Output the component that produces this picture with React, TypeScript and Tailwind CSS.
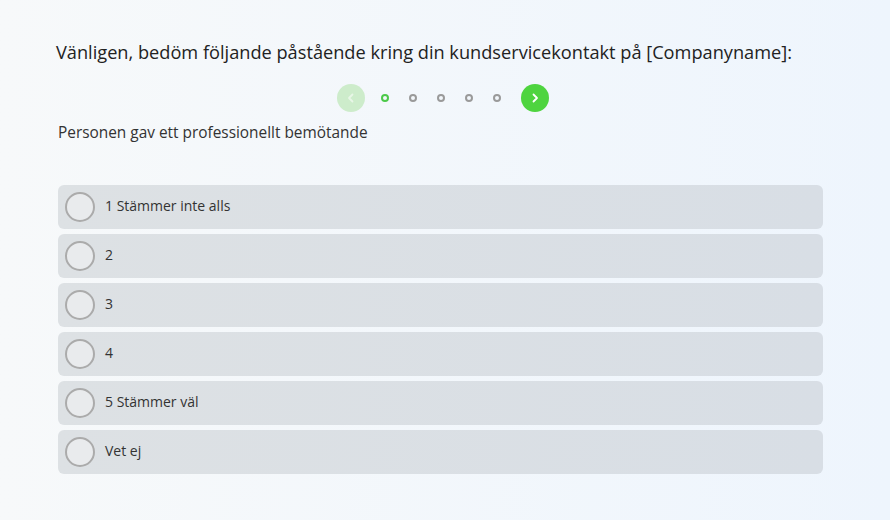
import React from "react";

const options = ["1 Stämmer inte alls", "2", "3", "4", "5 Stämmer väl", "Vet ej"];

export default function App() {
  return (
    <div
      className="w-[890px] h-[520px] bg-gradient-to-r from-[#f7f9fa] to-[#eef5fd] text-[#333]"
      style={{ fontFamily: '"Open Sans", "Noto Sans", sans-serif' }}
    >
      <div className="pl-[58px] w-[823px] pt-[40px]">
        <h1 className="text-[18.2px] leading-[24px] text-[#222] -ml-[2px] font-normal whitespace-nowrap">
          Vänligen, bedöm följande påstående kring din kundservicekontakt på [Companyname]:
        </h1>
        <div className="flex items-center justify-center mt-[20px] h-[28px] pl-[4px]">
          <button className="w-[28px] h-[28px] rounded-full bg-[#cdeccb] flex items-center justify-center">
            <svg width="10" height="12" viewBox="0 0 10 12" fill="none">
              <path d="M6.5 2.5 L3 6 L6.5 9.5" stroke="#e8f6e7" strokeWidth="1.8" strokeLinecap="round" strokeLinejoin="round" />
            </svg>
          </button>
          <div className="flex items-center gap-[20px] ml-[16px] mr-[20px]">
            <span className="w-[8px] h-[8px] rounded-full border-2 border-[#4cc94a]" />
            <span className="w-[8px] h-[8px] rounded-full border-2 border-[#9a9a9a]" />
            <span className="w-[8px] h-[8px] rounded-full border-2 border-[#9a9a9a]" />
            <span className="w-[8px] h-[8px] rounded-full border-2 border-[#9a9a9a]" />
            <span className="w-[8px] h-[8px] rounded-full border-2 border-[#9a9a9a]" />
          </div>
          <button className="w-[28px] h-[28px] rounded-full bg-[#4ed43f] flex items-center justify-center">
            <svg width="10" height="12" viewBox="0 0 10 12" fill="none">
              <path d="M3.5 2.5 L7 6 L3.5 9.5" stroke="#ffffff" strokeWidth="1.8" strokeLinecap="round" strokeLinejoin="round" />
            </svg>
          </button>
        </div>
        <p className="text-[15.4px] leading-[20px] mt-[11px] text-[#333]">
          Personen gav ett professionellt bemötande
        </p>
        <div className="flex flex-col gap-[5px] mt-[42px]">
          {options.map((o) => (
            <div
              key={o}
              className="h-[44px] rounded-[6px] bg-gradient-to-r from-[#dde1e4] to-[#d8dee5] flex items-center pl-[7px]"
            >
              <span className="w-[30px] h-[30px] rounded-full border-2 border-[#ababab] bg-[#e9ebed] shrink-0" />
              <span className="ml-[10px] mb-[2px] text-[14px] leading-[20px] text-[#333]">{o}</span>
            </div>
          ))}
        </div>
      </div>
    </div>
  );
}
